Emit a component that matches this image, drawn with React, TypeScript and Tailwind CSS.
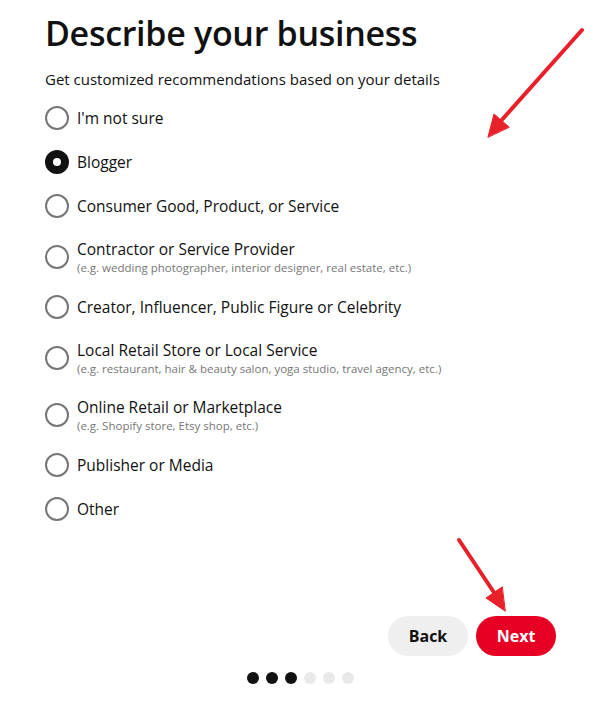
import { useState } from 'react'

type Option = { id: string; label: string; hint?: string }

const options: Option[] = [
  { id: 'unsure', label: "I'm not sure" },
  { id: 'blogger', label: 'Blogger' },
  { id: 'consumer', label: 'Consumer Good, Product, or Service' },
  {
    id: 'contractor',
    label: 'Contractor or Service Provider',
    hint: '(e.g. wedding photographer, interior designer, real estate, etc.)',
  },
  { id: 'creator', label: 'Creator, Influencer, Public Figure or Celebrity' },
  {
    id: 'local',
    label: 'Local Retail Store or Local Service',
    hint: '(e.g. restaurant, hair & beauty salon, yoga studio, travel agency, etc.)',
  },
  {
    id: 'online',
    label: 'Online Retail or Marketplace',
    hint: '(e.g. Shopify store, Etsy shop, etc.)',
  },
  { id: 'publisher', label: 'Publisher or Media' },
  { id: 'other', label: 'Other' },
]

function Radio({ checked }: { checked: boolean }) {
  return (
    <span
      className={
        checked
          ? 'box-border size-6 shrink-0 rounded-full border-[8px] border-[#111111] bg-white'
          : 'box-border size-6 shrink-0 rounded-full border-2 border-[#767676] bg-white'
      }
    />
  )
}

function Arrows() {
  return (
    <svg
      className="pointer-events-none absolute inset-0"
      width="612"
      height="709"
      viewBox="0 0 612 709"
    >
      <g fill="#e8202a" stroke="#e8202a" strokeLinecap="round">
        <line x1="582" y1="30" x2="500" y2="122" strokeWidth="4" />
        <polygon points="488,137 494,114 509,127" strokeWidth="1" />
        <line x1="459" y1="540" x2="497" y2="597" strokeWidth="4" />
        <polygon points="505,611 486,598 502,587" strokeWidth="1" />
      </g>
    </svg>
  )
}

export default function App() {
  const [selected, setSelected] = useState('blogger')

  return (
    <div className="relative h-[709px] w-[612px] overflow-hidden bg-white font-['Open_Sans',sans-serif] text-[#111111]">
      <div className="ml-[45px] flex w-[511px] flex-col pt-[12px]">
        <h1 className="text-[34px] leading-[42px] font-semibold tracking-[-0.3px]">Describe your business</h1>
        <p className="mt-[15px] text-[15px] leading-5">Get customized recommendations based on your details</p>

        <div className="mt-[17px] flex flex-col gap-5">
          {options.map((o) => (
            <button
              key={o.id}
              type="button"
              onClick={() => setSelected(o.id)}
              className="flex items-center gap-2 text-left"
            >
              <Radio checked={selected === o.id} />
              <span className="flex flex-col">
                <span className="text-[15.5px] leading-[22px]">{o.label}</span>
                {o.hint && <span className="text-[11.5px] leading-[15px] text-[#767676]">{o.hint}</span>}
              </span>
            </button>
          ))}
        </div>

        <div className="mt-[95px] flex justify-end gap-2">
          <button
            type="button"
            className="h-10 w-[80px] rounded-full bg-[#efefef] text-base font-bold text-[#111111]"
          >
            Back
          </button>
          <button
            type="button"
            className="h-10 w-[80px] rounded-full bg-[#e60023] text-base font-bold text-white"
          >
            Next
          </button>
        </div>

        <div className="mt-[16px] flex justify-center gap-[7px]">
          {[0, 1, 2, 3, 4, 5].map((i) => (
            <span
              key={i}
              className={i < 3 ? 'size-3 rounded-full bg-[#111111]' : 'size-3 rounded-full bg-[#e9e9e9]'}
            />
          ))}
        </div>
      </div>
      <Arrows />
    </div>
  )
}
